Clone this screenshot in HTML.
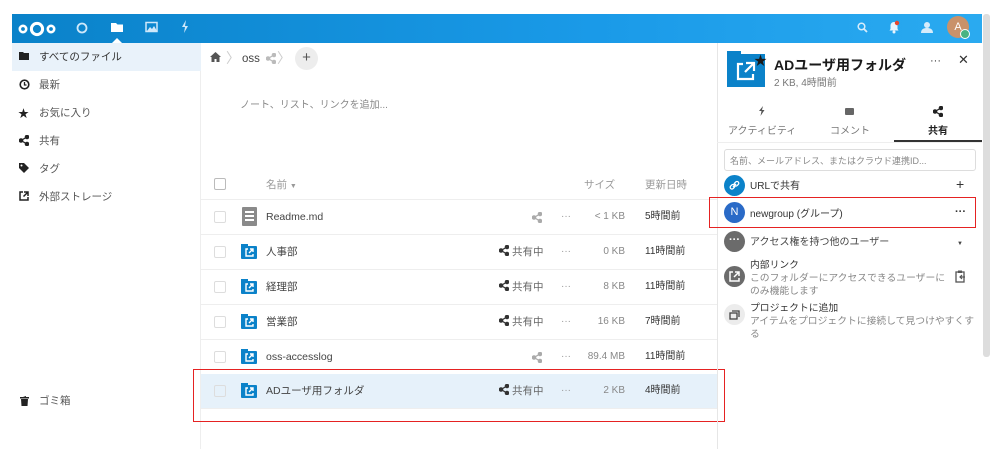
<!DOCTYPE html>
<html><head><meta charset="utf-8"><style>
*{box-sizing:border-box;margin:0;padding:0}
body{width:1000px;height:449px;background:#fff;font-family:"Liberation Sans","Noto Sans CJK JP",sans-serif;font-size:11px;color:#333;position:relative;overflow:hidden;line-height:14px}
.a{position:absolute}
.hdr{left:12px;top:14px;width:970px;height:29px;background:linear-gradient(90deg,#0a82c9,#1a9ae8 60%,#2aaaf0)}
.side{left:12px;top:43px;width:189px;height:406px;border-right:1px solid #eee}
.si{position:absolute;left:0;width:189px;height:28px;line-height:28px;padding-left:27px;color:#555;font-size:10.5px}
.row{position:absolute;left:201px;width:516px;height:35px;border-bottom:1px solid #eee}
.row div{line-height:14px}
.cb{position:absolute;left:13px;top:11px;width:12px;height:12px;border:1px solid #ddd;border-radius:2px}
.fi{position:absolute;left:40px;top:11px;width:16px;height:13px;background:#0b82c9;border-radius:1px}
.fi:before{content:"";position:absolute;left:0;top:-2px;width:7px;height:3px;background:#0b82c9}
.fi svg{position:absolute;left:4px;top:2px}
.nm{position:absolute;left:65px;top:10px;font-size:10.5px;color:#444}
.sh{position:absolute;left:298px;top:10px;color:#666;font-size:10.5px}
.sh svg{vertical-align:-1px;margin-right:3px}
.dots{position:absolute;left:360px;top:10px;color:#999;font-size:10px}
.sz{position:absolute;right:92px;top:10px;color:#888;font-size:10px}
.dt{position:absolute;left:444px;top:10px;color:#333;font-size:10px}
.rp{left:717px;top:43px;width:265px;height:406px;border-left:1px solid #e6e6e6}
</style></head><body>
<svg width="0" height="0" style="position:absolute"><defs><g id="sh"><circle cx="8" cy="2" r="1.8"/><circle cx="8" cy="9" r="1.8"/><circle cx="2" cy="5.5" r="1.8"/><path d="M8 2L2 5.5 8 9" fill="none" stroke-width="1.3"/></g>
<g id="ex"><path d="M3 1H1v7h7V6" fill="none" stroke="#fff" stroke-width="1.4"/><path d="M5 1h3v3M8 1L4 5" fill="none" stroke="#fff" stroke-width="1.4"/></g></defs></svg>
<div class="a hdr"></div>
<svg class="a" style="left:17px;top:20px" width="42" height="18"><circle cx="6" cy="9" r="3.2" fill="none" stroke="#fff" stroke-width="2.6"/><circle cx="20" cy="9" r="5.6" fill="none" stroke="#fff" stroke-width="3"/><circle cx="34" cy="9" r="3.2" fill="none" stroke="#fff" stroke-width="2.6"/></svg>
<svg class="a" style="left:76px;top:22px" width="12" height="12"><circle cx="6" cy="6" r="4.5" fill="none" stroke="#cfe8fa" stroke-width="1.8"/></svg>
<svg class="a" style="left:110px;top:21px" width="14" height="12"><path d="M1 2h5l1.5 1.5H13V11H1z" fill="#fff"/></svg>
<svg class="a" style="left:112px;top:37px" width="10" height="6"><path d="M0 6L5 1 10 6z" fill="#fff"/></svg>
<svg class="a" style="left:145px;top:21px" width="13" height="12"><rect x="1" y="1.5" width="11" height="9" fill="none" stroke="#cfe8fa" stroke-width="1.5"/><path d="M2 10l3-4 2 2 2-3 3 5z" fill="#cfe8fa"/></svg>
<svg class="a" style="left:181px;top:20px" width="8" height="13"><path d="M5 0L1 7h3l-1 6 4-7H4z" fill="#cfe8fa"/></svg>
<svg class="a" style="left:857px;top:22px" width="11" height="11"><circle cx="4.5" cy="4.5" r="3.3" fill="none" stroke="#d6ecfb" stroke-width="1.5"/><path d="M7 7l3 3" stroke="#d6ecfb" stroke-width="1.8"/></svg>
<svg class="a" style="left:888px;top:20px" width="12" height="14"><path d="M6 2c-2.5 0-3.5 2-3.5 4v3L1.5 10.5h9L9.5 9V6C9.5 4 8.5 2 6 2z" fill="#e8f4fd"/><circle cx="6" cy="12" r="1.5" fill="#e8f4fd"/><circle cx="9" cy="3" r="2.2" fill="#e9462e"/></svg>
<svg class="a" style="left:919px;top:21px" width="14" height="13"><circle cx="8" cy="4" r="3" fill="#d6ecfb"/><path d="M2 12c0-4 3-5 6-5s6 1 6 5z" fill="#d6ecfb"/></svg>
<div class="a" style="left:947px;top:16px;width:22px;height:22px;border-radius:50%;background:#c9926a;color:#fff;font-size:11px;text-align:center;line-height:22px">A</div>
<div class="a" style="left:960px;top:29px;width:10px;height:10px;border-radius:50%;background:#49b382;border:1.5px solid #fff"></div>
<div class="a" style="left:983px;top:14px;width:7px;height:343px;background:#ddd;border-radius:3px"></div>

<div class="a side">
<div class="si" style="top:0;background:#e9f2fa;color:#333">すべてのファイル</div>
<div class="si" style="top:28px">最新</div>
<div class="si" style="top:56px">お気に入り</div>
<div class="si" style="top:84px">共有</div>
<div class="si" style="top:112px">タグ</div>
<div class="si" style="top:140px">外部ストレージ</div>
<div class="si" style="top:344px">ゴミ箱</div>
</div>
<svg class="a" style="left:19px;top:51px" width="11" height="10"><path d="M0 1h4l1 1h5v7H0z" fill="#222"/></svg>
<svg class="a" style="left:19px;top:79px" width="11" height="11"><circle cx="5.5" cy="5.5" r="4.3" fill="none" stroke="#222" stroke-width="1.6"/><path d="M5.5 3v3h2" fill="none" stroke="#222" stroke-width="1.3"/></svg>
<div class="a" style="left:18px;top:107px;font-size:11px;color:#222">★</div>
<svg class="a" style="left:19px;top:135px" width="10" height="11" fill="#222" stroke="#222"><use href="#sh"/></svg>
<svg class="a" style="left:19px;top:163px" width="10" height="10"><path d="M0 0h5l5 5-5 5-5-5z" fill="#222"/><circle cx="2.5" cy="2.5" r="1" fill="#fff"/></svg>
<svg class="a" style="left:19px;top:191px" width="10" height="10"><path d="M4 1H1v8h8V6" fill="none" stroke="#222" stroke-width="1.5"/><path d="M5 1h4v4M9 1L4.5 5.5" fill="none" stroke="#222" stroke-width="1.5"/></svg>
<svg class="a" style="left:20px;top:396px" width="9" height="10"><path d="M0 1h9v1.5H0zM3 0h3v1zM1 3h7l-.5 7h-6z" fill="#222"/></svg>

<svg class="a" style="left:210px;top:52px" width="11" height="10"><path d="M5.5 0L0 5h1.5v5h3V7h2v3h3V5H11z" fill="#555"/></svg>
<div class="a" style="left:226px;top:51px;color:#ccc;font-size:14px">〉</div>
<div class="a" style="left:242px;top:52px;color:#444;font-size:11.5px">oss</div>
<svg class="a" style="left:266px;top:53px" width="10" height="11" fill="#bbb" stroke="#bbb"><use href="#sh"/></svg>
<div class="a" style="left:277px;top:51px;color:#ccc;font-size:14px">〉</div>
<div class="a" style="left:295px;top:47px;width:23px;height:23px;border-radius:50%;background:#ededed;color:#555;text-align:center;line-height:22px;font-size:15px">+</div>
<div class="a" style="left:240px;top:99px;color:#888;font-size:10px">ノート、リスト、リンクを追加...</div>

<div class="row" style="top:167px;height:33px">
<div class="cb" style="top:11px;border-color:#bbb"></div>
<div class="a" style="left:65px;top:11px;color:#999;font-size:10.5px">名前 <span style="font-size:7px">▼</span></div>
<div class="a" style="left:383px;top:11px;color:#999;font-size:10.5px">サイズ</div>
<div class="a" style="left:444px;top:11px;color:#999;font-size:10.5px">更新日時</div>
</div>

<div class="row" style="top:200px"><div class="cb"></div>
<div class="a" style="left:41px;top:7px;width:15px;height:19px;background:#8a8a8a;border-radius:1px"><div style="margin:4px 3px;height:1.5px;background:#fff;box-shadow:0 4px #fff,0 8px #fff"></div></div>
<div class="nm">Readme.md</div><svg class="a" style="left:331px;top:12px" width="10" height="11" fill="#aaa" stroke="#aaa"><use href="#sh"/></svg><div class="dots">···</div><div class="sz">&lt; 1 KB</div><div class="dt">5時間前</div></div>

<div class="row" style="top:235px"><div class="cb"></div><div class="fi"><svg width="9" height="9"><use href="#ex"/></svg></div><div class="nm">人事部</div><div class="sh"><svg width="10" height="11" fill="#333" stroke="#333"><use href="#sh"/></svg>共有中</div><div class="dots">···</div><div class="sz">0 KB</div><div class="dt">11時間前</div></div>
<div class="row" style="top:270px"><div class="cb"></div><div class="fi"><svg width="9" height="9"><use href="#ex"/></svg></div><div class="nm">経理部</div><div class="sh"><svg width="10" height="11" fill="#333" stroke="#333"><use href="#sh"/></svg>共有中</div><div class="dots">···</div><div class="sz">8 KB</div><div class="dt">11時間前</div></div>
<div class="row" style="top:305px"><div class="cb"></div><div class="fi"><svg width="9" height="9"><use href="#ex"/></svg></div><div class="nm">営業部</div><div class="sh"><svg width="10" height="11" fill="#333" stroke="#333"><use href="#sh"/></svg>共有中</div><div class="dots">···</div><div class="sz">16 KB</div><div class="dt">7時間前</div></div>
<div class="row" style="top:340px"><div class="cb"></div><div class="fi"><svg width="9" height="9"><use href="#ex"/></svg></div><div class="nm">oss-accesslog</div><svg class="a" style="left:331px;top:12px" width="10" height="11" fill="#aaa" stroke="#aaa"><use href="#sh"/></svg><div class="dots">···</div><div class="sz">89.4 MB</div><div class="dt">11時間前</div></div>
<div class="row" style="top:374px;background:#e6f1fa"><div class="cb"></div><div class="fi"><svg width="9" height="9"><use href="#ex"/></svg></div><div class="nm">ADユーザ用フォルダ</div><div class="sh"><svg width="10" height="11" fill="#333" stroke="#333"><use href="#sh"/></svg>共有中</div><div class="dots">···</div><div class="sz">2 KB</div><div class="dt">4時間前</div></div>
<div class="a" style="left:193px;top:369px;width:532px;height:53px;border:1px solid #e52222"></div>

<div class="a rp"></div>
<div class="a" style="left:727px;top:54px;width:38px;height:33px;background:#0b82c9"></div>
<div class="a" style="left:727px;top:51px;width:14px;height:4px;background:#0b82c9"></div>
<svg class="a" style="left:736px;top:61px" width="20" height="20"><path d="M7 3H2v15h15v-5" fill="none" stroke="#fff" stroke-width="2.2"/><path d="M10 2h8v8M18 2L9 11" fill="none" stroke="#fff" stroke-width="2.2"/></svg>
<div class="a" style="left:754px;top:54px;font-size:13px;color:#1a1a1a">★</div>
<div class="a" style="left:774px;top:57px;font-size:14px;font-weight:bold;color:#1a1a1a;line-height:17px">ADユーザ用フォルダ</div>
<div class="a" style="left:774px;top:77px;font-size:10px;color:#777">2 KB, 4時間前</div>
<div class="a" style="left:930px;top:54px;color:#333">···</div>
<div class="a" style="left:958px;top:53px;color:#333;font-size:13px">✕</div>
<svg class="a" style="left:759px;top:106px" width="6" height="10"><path d="M4 0L0 5h2.5l-1 5 4-6H3z" fill="#555"/></svg>
<div class="a" style="left:728px;top:125px;color:#777;font-size:10px">アクティビティ</div>
<div class="a" style="left:845px;top:108px;width:9px;height:7px;background:#666;border-radius:1px"></div>
<div class="a" style="left:830px;top:125px;color:#777;font-size:10px">コメント</div>
<svg class="a" style="left:933px;top:106px" width="10" height="11" fill="#222" stroke="#222"><use href="#sh"/></svg>
<div class="a" style="left:928px;top:125px;color:#222;font-size:10px;font-weight:bold">共有</div>
<div class="a" style="left:894px;top:140px;width:88px;height:2px;background:#333"></div>
<div class="a" style="left:717px;top:142px;width:265px;height:1px;background:#eee"></div>
<div class="a" style="left:724px;top:149px;width:252px;height:22px;border:1px solid #ddd;border-radius:3px;padding:4px 5px;color:#888;font-size:9px">名前、メールアドレス、またはクラウド連携ID...</div>
<div class="a" style="left:724px;top:175px;width:21px;height:21px;border-radius:50%;background:#0b82c9"></div>
<svg class="a" style="left:729px;top:180px" width="11" height="11"><path d="M4 7l3-3" stroke="#fff" stroke-width="1.5"/><rect x="1" y="5" width="5" height="3.5" rx="1.7" transform="rotate(-45 3.5 6.8)" fill="none" stroke="#fff" stroke-width="1.3"/><rect x="5" y="2" width="5" height="3.5" rx="1.7" transform="rotate(-45 7.5 3.8)" fill="none" stroke="#fff" stroke-width="1.3"/></svg>
<div class="a" style="left:750px;top:180px;color:#333;font-size:10px">URLで共有</div>
<div class="a" style="left:956px;top:177px;color:#333;font-size:14px">+</div>
<div class="a" style="left:709px;top:197px;width:267px;height:31px;border:1px solid #e52222"></div>
<div class="a" style="left:724px;top:202px;width:21px;height:21px;border-radius:50%;background:#2a6ac7;color:#fff;text-align:center;line-height:21px;font-size:11px">N</div>
<div class="a" style="left:750px;top:208px;color:#333;font-size:10px">newgroup (グループ)</div>
<div class="a" style="left:955px;top:205px;color:#333;font-weight:bold">···</div>
<div class="a" style="left:724px;top:231px;width:21px;height:21px;border-radius:50%;background:#6b6b6b;color:#fff;text-align:center;line-height:19px;font-weight:bold">···</div>
<div class="a" style="left:750px;top:236px;color:#444;font-size:10px">アクセス権を持つ他のユーザー</div>
<div class="a" style="left:957px;top:237px;color:#444;font-size:6px">▼</div>
<div class="a" style="left:724px;top:266px;width:21px;height:21px;border-radius:50%;background:#6b6b6b"></div>
<svg class="a" style="left:729px;top:271px" width="11" height="11"><path d="M4 1H1v9h9V7" fill="none" stroke="#fff" stroke-width="1.5"/><path d="M6 1h4v4M10 1L5 6" fill="none" stroke="#fff" stroke-width="1.5"/></svg>
<div class="a" style="left:750px;top:259px;color:#333;font-size:9.8px;line-height:13px">内部リンク<br><span style="color:#888">このフォルダーにアクセスできるユーザーに<br>のみ機能します</span></div>
<svg class="a" style="left:955px;top:270px" width="11" height="13"><rect x="1" y="2" width="8" height="10" fill="none" stroke="#555" stroke-width="1.3"/><rect x="3" y="0.5" width="4" height="2.5" fill="#555"/><path d="M5 7h5M7 5l-2 2 2 2" fill="none" stroke="#555" stroke-width="1.2"/></svg>
<div class="a" style="left:724px;top:304px;width:21px;height:21px;border-radius:50%;background:#ececec"></div>
<svg class="a" style="left:729px;top:309px" width="11" height="11"><rect x="1" y="4" width="7" height="6" fill="none" stroke="#444" stroke-width="1.3"/><path d="M3 2h7v6" fill="none" stroke="#444" stroke-width="1.3"/></svg>
<div class="a" style="left:750px;top:302px;color:#333;font-size:9.8px;line-height:13px">プロジェクトに追加<br><span style="color:#888">アイテムをプロジェクトに接続して見つけやすくす<br>る</span></div>
</body></html>
